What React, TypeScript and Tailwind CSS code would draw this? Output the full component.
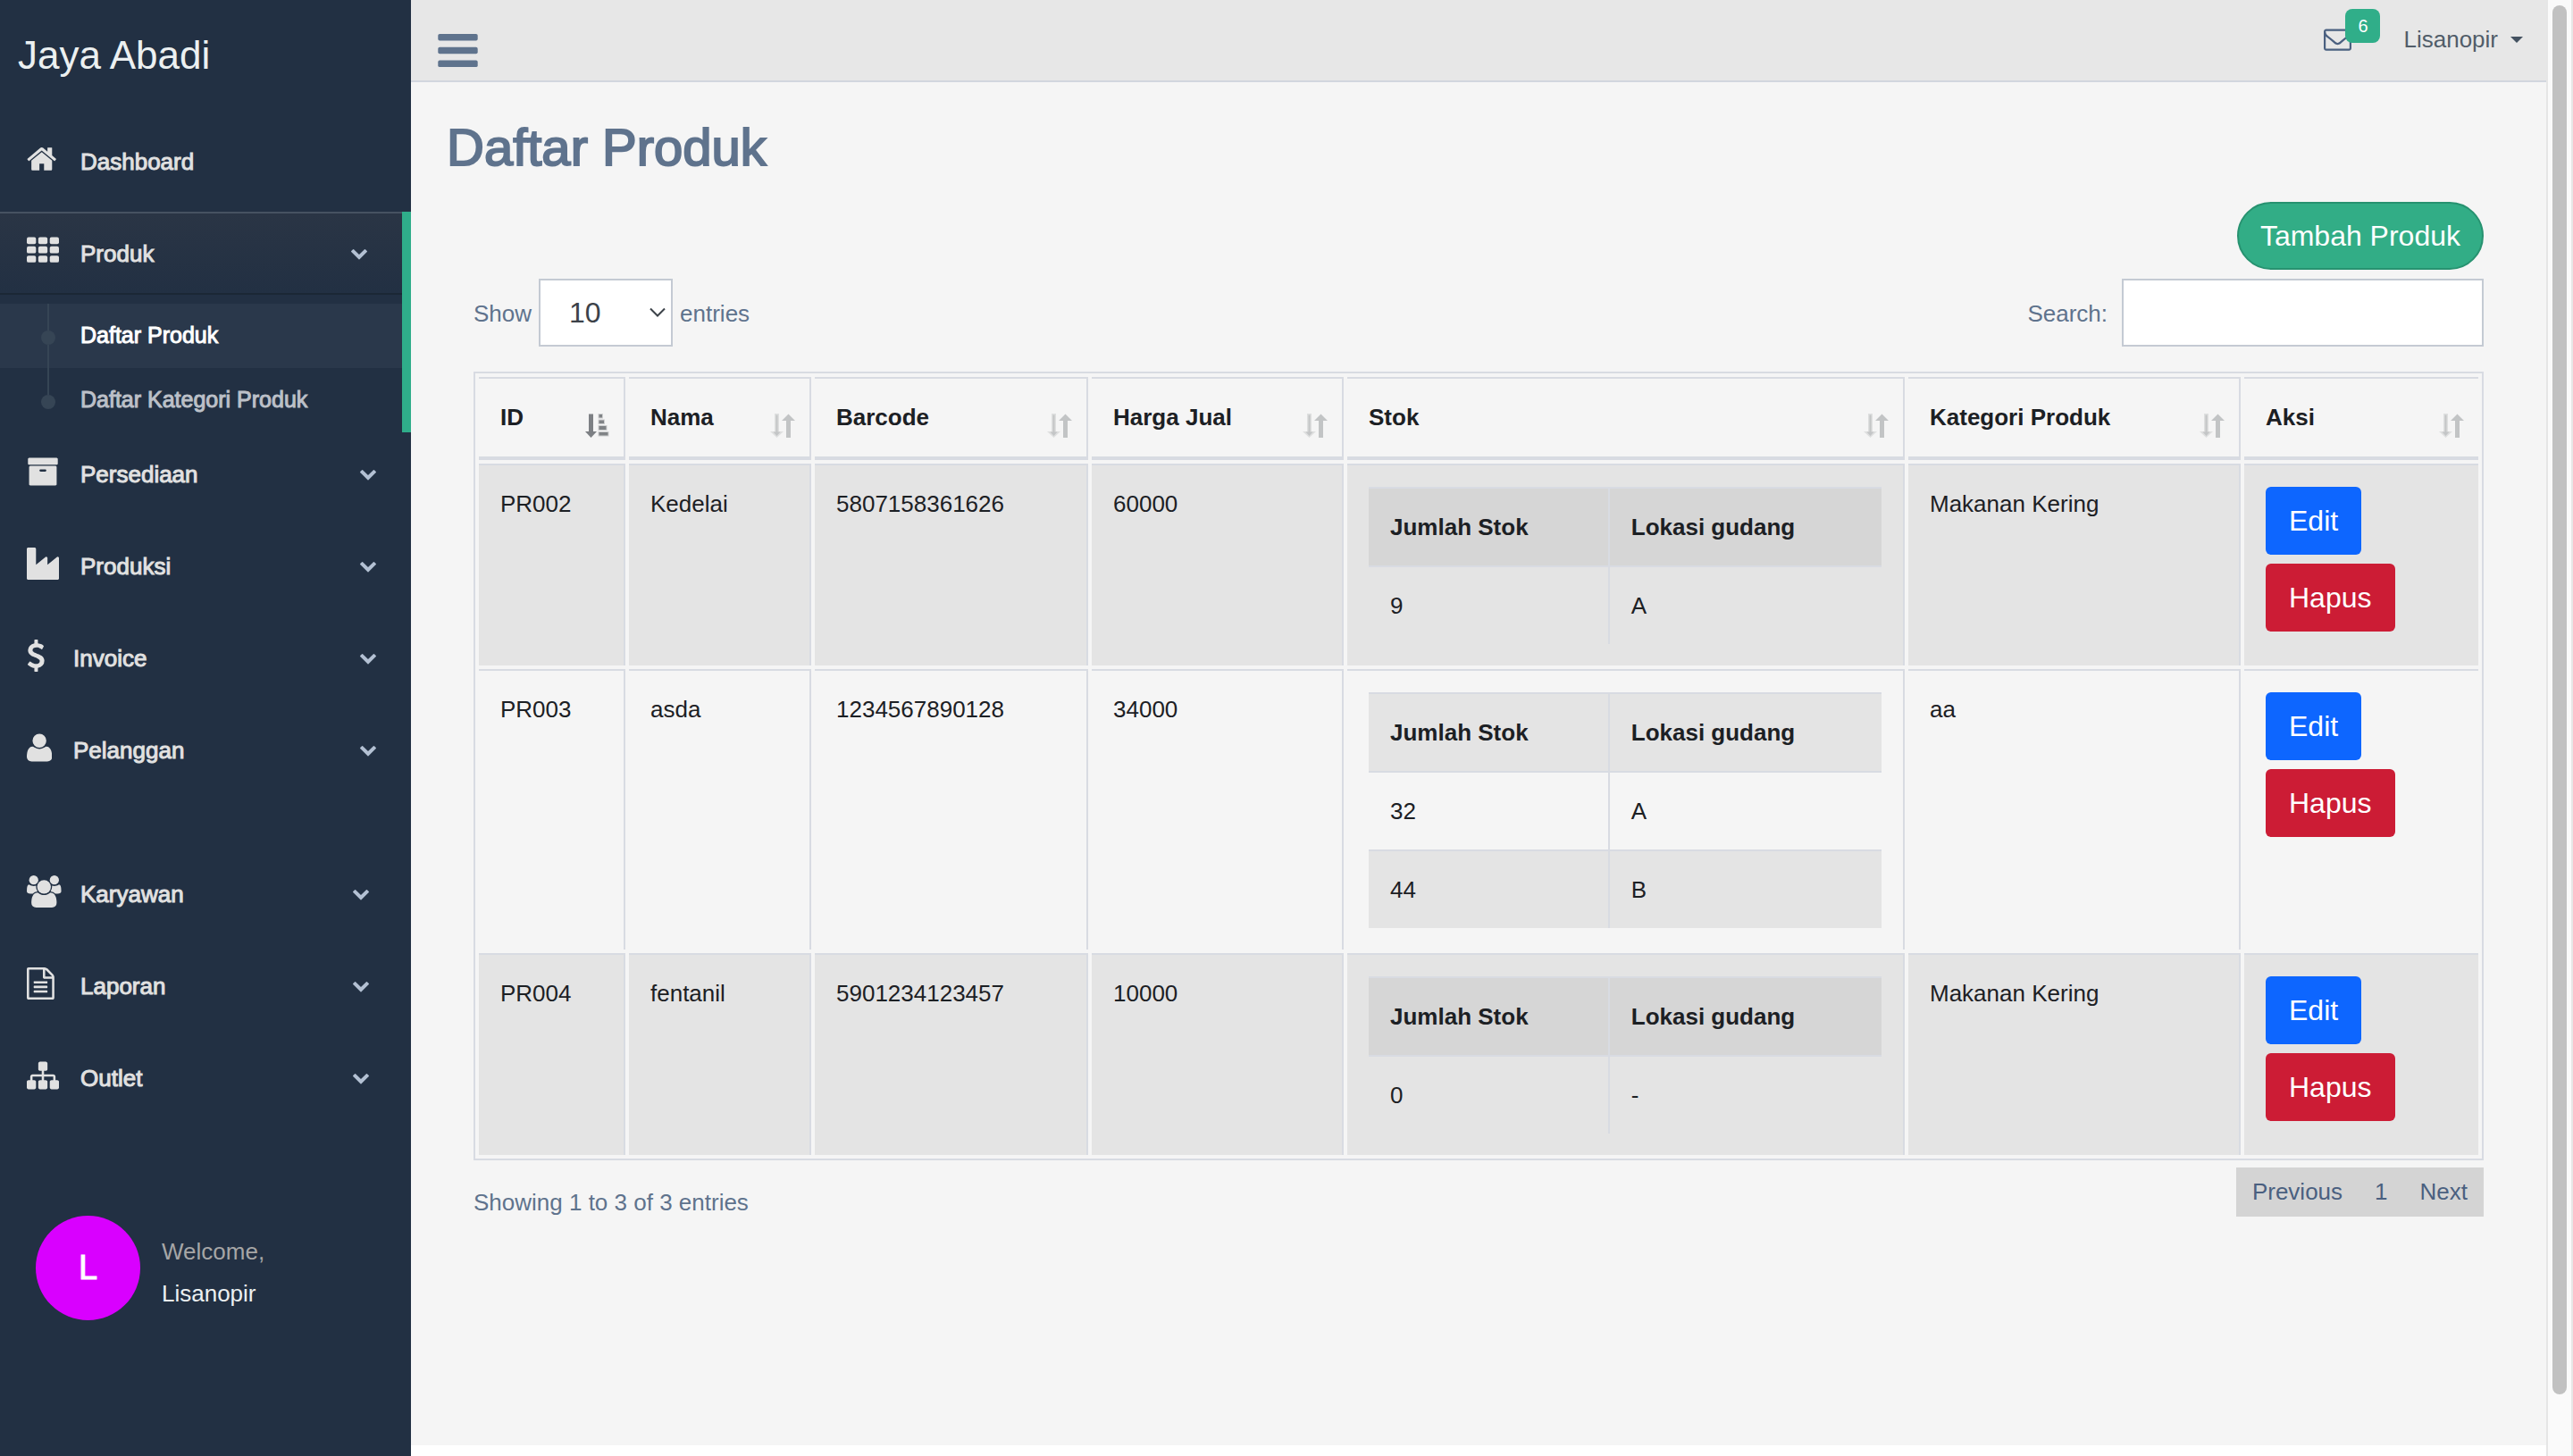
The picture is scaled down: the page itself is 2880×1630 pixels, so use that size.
import React, { useState } from "react";

type Product = {
  id: string;
  name: string;
  barcode: string;
  price: string;
  category: string;
  stock: { amount: string; warehouse: string }[];
};

const PRODUCTS: Product[] = [
  {
    id: "PR002",
    name: "Kedelai",
    barcode: "5807158361626",
    price: "60000",
    category: "Makanan Kering",
    stock: [{ amount: "9", warehouse: "A" }],
  },
  {
    id: "PR003",
    name: "asda",
    barcode: "1234567890128",
    price: "34000",
    category: "aa",
    stock: [
      { amount: "32", warehouse: "A" },
      { amount: "44", warehouse: "B" },
    ],
  },
  {
    id: "PR004",
    name: "fentanil",
    barcode: "5901234123457",
    price: "10000",
    category: "Makanan Kering",
    stock: [{ amount: "0", warehouse: "-" }],
  },
];

const COLUMNS = ["ID", "Nama", "Barcode", "Harga Jual", "Stok", "Kategori Produk", "Aksi"];

const MEDIUM = "[-webkit-text-stroke:1px_currentColor]";

function Glyph({ viewBox, children }: { viewBox: string; children: React.ReactNode }) {
  return (
    <svg viewBox={viewBox} className="h-9 w-auto shrink-0 fill-current" aria-hidden="true">
      {children}
    </svg>
  );
}

const HomeIcon = (
  <Glyph viewBox="64 0 1664 1792">
    <path d="M1472 992v480q0 26-19 45t-45 19h-384v-384h-256v384h-384q-26 0-45-19t-19-45v-480q0-1 .5-3t.5-3l575-474 575 474q1 2 1 6zm223-69l-62 74q-8 9-21 11h-3q-13 0-21-7l-692-577-692 577q-12 8-24 7-13-2-21-11l-62-74q-8-10-7-23.5t11-21.5l719-599q32-26 76-26t76 26l244 204v-195q0-14 9-23t23-9h192q14 0 23 9t9 23v408l219 182q10 8 11 21.5t-7 23.5z" />
  </Glyph>
);

const GridIcon = (
  <Glyph viewBox="0 0 1792 1792">
    {[128, 640, 1152].map((y) =>
      [0, 640, 1280].map((x) => (
        <rect key={`${x}-${y}`} x={x} y={y} width="512" height="384" rx="96" />
      ))
    )}
  </Glyph>
);

const ArchiveIcon = (
  <Glyph viewBox="0 0 1792 1792">
    <path d="M1088 832q0-26-19-45t-45-19h-256q-26 0-45 19t-19 45 19 45 45 19h256q26 0 45-19t19-45zm576-192v960q0 26-19 45t-45 19h-1408q-26 0-45-19t-19-45v-960q0-26 19-45t45-19h1408q26 0 45 19t19 45zm64-448v256q0 26-19 45t-45 19h-1536q-26 0-45-19t-19-45v-256q0-26 19-45t45-19h1536q26 0 45 19t19 45z" />
  </Glyph>
);

const IndustryIcon = (
  <Glyph viewBox="0 0 1792 1792">
    <path d="M448 0q26 0 45 19t19 45v891l536-429q17-14 40-14 26 0 45 19t19 45v379l536-429q17-14 40-14 26 0 45 19t19 45v1152q0 26-19 45t-45 19h-1664q-26 0-45-19t-19-45v-1664q0-26 19-45t45-19h384z" />
  </Glyph>
);

const DollarIcon = (
  <Glyph viewBox="384 0 1024 1792">
    <path d="M1362 1185q0 153-99.5 263.5t-258.5 136.5v175q0 14-9 23t-23 9h-135q-13 0-22.5-9.5t-9.5-22.5v-175q-66-9-127.5-31t-101.5-44.5-74-48-46.5-37.5-17.5-18q-17-21-2-41l103-135q7-10 23-12 15-2 24 9l2 2q113 99 243 125 37 8 74 8 81 0 142.5-43t61.5-122q0-28-15-53t-33.5-42-58.5-37.5-66-32-80-32.5q-39-16-61.5-25t-61.5-26.5-62.5-31-56.5-35.5-53.5-42.5-43.5-49-35.5-58-21-66.5-8.5-78q0-138 98-242t255-134v-180q0-13 9.5-22.5t22.5-9.5h135q14 0 23 9t9 23v176q57 6 110.5 23t87 33.5 63.5 37.5 39 29 15 14q17 18 5 38l-81 146q-8 15-23 16-14 3-27-7-3-3-14.5-12t-39-26.5-58.5-32-74.5-26-85.5-11.5q-95 0-155 43t-60 111q0 26 8.5 48t29.5 41.5 39.5 33 56 31 60.5 27 70 27.5q53 20 81 31.5t76 35 75.5 42.5 62 50 53 63.5 31.5 76.5 13 94z" />
  </Glyph>
);

const UserIcon = (
  <Glyph viewBox="192 0 1408 1792">
    <path d="M1600 1405q0 120-73 189.5t-194 69.5h-874q-121 0-194-69.5t-73-189.5q0-53 3.5-103.5t14-109 26.5-108.5 43-97.5 62-81 85.5-53.5 111.5-20q9 0 42 21.5t74.5 48 108 48 133.5 21.5 133.5-21.5 108-48 74.5-48 42-21.5q61 0 111.5 20t85.5 53.5 62 81 43 97.5 26.5 108.5 14 109 3.5 103.5zm-320-893q0 159-112.5 271.5t-271.5 112.5-271.5-112.5-112.5-271.5 112.5-271.5 271.5-112.5 271.5 112.5 112.5 271.5z" />
  </Glyph>
);

const UsersIcon = (
  <Glyph viewBox="64 0 1920 1792">
    <path d="M657 896q-162 5-265 128h-134q-82 0-138-40.5t-56-118.5q0-353 124-353 6 0 43.5 21t97.5 42.5 119 21.5q67 0 133-23-5 37-5 66 0 139 81 256z" />
    <path d="M1728 1533q0 120-73 189.5t-194 69.5h-874q-121 0-194-69.5t-73-189.5q0-53 3.5-103.5t14-109 26.5-108.5 43-97.5 62-81 85.5-53.5 111.5-20q10 0 43 21.5t73 48 107 48 135 21.5 135-21.5 107-48 73-48 43-21.5q61 0 111.5 20t85.5 53.5 62 81 43 97.5 26.5 108.5 14 109 3.5 103.5z" />
    <path d="M1984 865q0 78-56 118.5t-138 40.5h-134q-103-123-265-128 81-117 81-256 0-29-5-66 66 23 133 23 59 0 119-21.5t97.5-42.5 43.5-21q124 0 124 353z" />
    <circle cx="448" cy="256" r="256" />
    <circle cx="1600" cy="256" r="256" />
    <circle cx="1024" cy="640" r="384" />
  </Glyph>
);

const FileIcon = (
  <Glyph viewBox="128 0 1536 1792">
    <path d="M1596 380q28 28 48 76t20 88v1152q0 40-28 68t-68 28h-1344q-40 0-68-28t-28-68v-1600q0-40 28-68t68-28h896q40 0 88 20t76 48zm-444-244v376h376q-10-29-22-41l-313-313q-12-12-41-22zm384 1528v-1024h-416q-40 0-68-28t-28-68v-416h-768v1536h1280zm-1024-864q0-14 9-23t23-9h704q14 0 23 9t9 23v64q0 14-9 23t-23 9h-704q-14 0-23-9t-9-23v-64zm736 224q14 0 23 9t9 23v64q0 14-9 23t-23 9h-704q-14 0-23-9t-9-23v-64q0-14 9-23t23-9h704zm0 256q14 0 23 9t9 23v64q0 14-9 23t-23 9h-704q-14 0-23-9t-9-23v-64q0-14 9-23t23-9h704z" />
  </Glyph>
);

const SitemapIcon = (
  <Glyph viewBox="0 0 1792 1792">
    <path d="M1792 1248v320q0 40-28 68t-68 28h-320q-40 0-68-28t-28-68v-320q0-40 28-68t68-28h96v-192h-512v192h96q40 0 68 28t28 68v320q0 40-28 68t-68 28h-320q-40 0-68-28t-28-68v-320q0-40 28-68t68-28h96v-192h-512v192h96q40 0 68 28t28 68v320q0 40-28 68t-68 28h-320q-40 0-68-28t-28-68v-320q0-40 28-68t68-28h96v-192q0-52 38-90t90-38h512v-192h-96q-40 0-68-28t-28-68v-320q0-40 28-68t68-28h320q40 0 68 28t28 68v320q0 40-28 68t-68 28h-96v192h512q52 0 90 38t38 90v192h96q40 0 68 28t28 68z" />
  </Glyph>
);

function Chevron() {
  return (
    <svg viewBox="0 0 1792 1792" className="mb-1 ml-auto h-5 w-5 self-center fill-[#b3c0d3]" aria-hidden="true">
      <path d="M1683 808l-742 741q-19 19-45 19t-45-19l-742-741q-19-19-19-45.5t19-45.5l166-165q19-19 45-19t45 19l531 531 531-531q19-19 45-19t45 19l166 165q19 19 19 45.5t-19 45.5z" />
    </svg>
  );
}

type NavProps = {
  icon: React.ReactNode;
  label: string;
  tight?: boolean;
  chevron?: "near" | "far";
  active?: boolean;
};

function NavLink({ icon, label, tight, chevron, active }: NavProps) {
  return (
    <a
      href="#"
      className={`mb-[10px] flex items-start border-y-2 pb-[22px] pl-[30px] pt-6 text-[26px] leading-[43px] text-[#e1e1e1] ${
        chevron === "near" ? "pr-[46px]" : "pr-[38px]"
      } ${
        active
          ? "border-t-[#465261] border-b-[#1b2735] bg-linear-to-b from-[#2a3545] to-[#223043] [text-shadow:0_-2px_0_rgba(0,0,0,0.25)]"
          : "border-transparent"
      }`}
    >
      <span className={tight ? "w-[52px]" : "w-[60px]"}>{icon}</span>
      <span className={MEDIUM}>{label}</span>
      {chevron && <Chevron />}
    </a>
  );
}

function SubLink({ label, current, last }: { label: string; current?: boolean; last?: boolean }) {
  return (
    <a
      href="#"
      className={`flex h-[72px] text-[25px] leading-[70px] ${
        current ? "bg-[#2a384b] text-white" : "text-[#bcc0c8]"
      }`}
    >
      <span className="flex w-[90px] flex-col items-center pl-[18px]">
        <span className="h-[30px] w-[2px] bg-[#364555]" />
        <span className="h-4 w-4 rounded-full bg-[#364555]" />
        {!last && <span className="w-[2px] flex-1 bg-[#364555]" />}
      </span>
      <span className={MEDIUM}>{label}</span>
    </a>
  );
}

function Sidebar() {
  return (
    <aside className="w-[460px] shrink-0 bg-[#223043]">
      <a href="#" className="block px-5 pt-8 text-[44px] leading-[60px] text-[#ecf0f1]">
        Jaya Abadi
      </a>
      <nav className="mt-[42px]">
        <NavLink icon={HomeIcon} label="Dashboard" />
        <div className="border-r-[10px] border-[#2fad8a]">
          <NavLink icon={GridIcon} label="Produk" chevron="far" active />
          <SubLink label="Daftar Produk" current />
          <SubLink label="Daftar Kategori Produk" last />
        </div>
        <NavLink icon={ArchiveIcon} label="Persediaan" chevron="far" />
        <NavLink icon={IndustryIcon} label="Produksi" chevron="far" />
        <NavLink icon={DollarIcon} label="Invoice" chevron="far" tight />
        <NavLink icon={UserIcon} label="Pelanggan" chevron="far" tight />
      </nav>
      <nav className="mt-[68px]">
        <NavLink icon={UsersIcon} label="Karyawan" chevron="near" />
        <NavLink icon={FileIcon} label="Laporan" chevron="near" />
        <NavLink icon={SitemapIcon} label="Outlet" chevron="near" />
      </nav>
      <div className="mt-[108px] flex items-center gap-6 pl-10">
        <div className="flex h-[117px] w-[117px] items-center justify-center rounded-full bg-[#d900ff] text-[38px] text-white">
          <span className={MEDIUM}>L</span>
        </div>
        <div className="pt-[10px] text-[26px] leading-[47px]">
          <p className="text-[#a6a6a6]">Welcome,</p>
          <p className="text-[#ecf0f1]">Lisanopir</p>
        </div>
      </div>
    </aside>
  );
}

function TopBar() {
  return (
    <header className="flex h-[92px] items-start justify-between border-b-2 border-[#d2d6de] bg-[#e7e7e7] pl-[30px] pr-[26px]">
      <button type="button" aria-label="Toggle menu" className="mt-[38px]">
        <svg viewBox="128 256 1536 1280" className="h-[37px] w-[45px] fill-[#5f738d]" aria-hidden="true">
          <rect x="128" y="256" width="1536" height="256" rx="64" />
          <rect x="128" y="768" width="1536" height="256" rx="64" />
          <rect x="128" y="1280" width="1536" height="256" rx="64" />
        </svg>
      </button>
      <div className="flex items-start">
        <button type="button" aria-label="Messages" className="relative mr-[58px] mt-7 text-[#4a6080]">
          <svg viewBox="0 0 1792 1792" className="h-[31px] w-[31px] fill-current" aria-hidden="true">
            <path d="M1664 1504v-768q-32 36-69 66-268 206-426 338-51 43-83 67t-86.500 48.500-102.500 24.500h-2q-48 0-102.500-24.500t-86.500-48.500-83-67q-158-132-426-338-37-30-69-66v768q0 13 9.500 22.500t22.500 9.500h1472q13 0 22.500-9.500t9.500-22.500zm0-1051v-24.500l-.5-13-3-12.500-5.500-9-9-7.500-14-2.500h-1472q-13 0-22.500 9.500t-9.500 22.500q0 168 147 284 193 152 401 317 6 5 35 29.500t46 37.500 44.500 31.500 50.500 27.500 43 9h2q20 0 43-9t50.500-27.500 44.500-31.500 46-37.500 35-29.500q208-165 401-317 54-43 100.500-115.500t46.500-131.500zm128-37v1088q0 66-47 113t-113 47h-1472q-66 0-113-47t-47-113v-1088q0-66 47-113t113-47h1472q66 0 113 47t47 113z" />
          </svg>
          <span className="absolute -right-8 -top-[18px] flex h-[38px] w-[39px] items-center justify-center rounded-lg bg-[#30ae89] text-[20px] leading-none text-white">
            6
          </span>
        </button>
        <button type="button" className="mt-[25px] flex items-center gap-[14px] text-[26px] leading-[39px] text-[#515d69]">
          Lisanopir
          <svg viewBox="0 0 14 7" className="h-[7px] w-[14px] fill-[#445261]" aria-hidden="true">
            <path d="M0 0h14l-7 7z" />
          </svg>
        </button>
      </div>
    </header>
  );
}

function SortIcon({ sorted }: { sorted?: boolean }) {
  if (sorted) {
    return (
      <svg viewBox="0 0 28 28" className="-mb-1 mt-[15px] h-7 w-7 shrink-0" aria-hidden="true">
        <path d="M5 0.500h5v19.500h4l-6.500 7l-6.500-7h4z" fill="#7d8084" />
        <g fill="#808386" stroke="#cfd0d1" strokeWidth="1">
          <rect x="16" y="0.500" width="4.500" height="4.500" />
          <rect x="16" y="7" width="6.500" height="4.500" />
          <rect x="16" y="13.500" width="9" height="5" />
          <rect x="16" y="20.500" width="11" height="4.500" />
        </g>
      </svg>
    );
  }
  return (
    <svg viewBox="0 0 28 28" className="-mb-1 mt-[15px] h-7 w-7 shrink-0" aria-hidden="true">
      <path d="M5 0h5v20h5l-7.500 7l-7.500-7h5z" fill="#dedfdf" />
      <path d="M6.500 1.500h2v19h3l-4 4.500l-4-4.500h3z" fill="#c3c5c6" />
      <path d="M18 27v-19h-5l7.500-7.500l7.500 7.500h-5v19z" fill="#c2c4c5" />
    </svg>
  );
}

function StockTable({ stock, dark }: { stock: Product["stock"]; dark: boolean }) {
  const header = dark ? "bg-[#d6d6d6]" : "bg-[#e4e4e4]";
  return (
    <table className="w-full table-fixed border-separate border-spacing-0 text-left leading-[38px]">
      <colgroup>
        <col className="w-[47%]" />
        <col />
      </colgroup>
      <thead>
        <tr className={header}>
          <th className="border-r-2 border-y-2 border-[#d8dbe2] p-6 font-bold">Jumlah Stok</th>
          <th className="border-y-2 border-[#d8dbe2] p-6 font-bold">Lokasi gudang</th>
        </tr>
      </thead>
      <tbody>
        {stock.map((s, i) => {
          const line = i === 0 ? "border-t-0" : "border-t-2";
          const fill = i % 2 === 1 ? "bg-[#e4e4e4]" : "";
          return (
            <tr key={s.warehouse} className={fill}>
              <td className={`border-r-2 border-[#d8dbe2] px-6 py-6 ${line}`}>{s.amount}</td>
              <td className={`border-[#d8dbe2] px-6 py-6 ${line}`}>{s.warehouse}</td>
            </tr>
          );
        })}
      </tbody>
    </table>
  );
}

function ProductTable() {
  const cell = "border-t-2 border-r-2 border-[#d8dbe2] p-6 last:border-r-0";
  return (
    <table className="mt-7 w-full table-fixed border-separate border-spacing-1 border-2 border-[#d8dbe2] text-left text-[26px] leading-[39px] text-[#1c2024]">
      <colgroup>
        <col className="w-[164px]" />
        <col className="w-[204px]" />
        <col className="w-[306px]" />
        <col className="w-[282px]" />
        <col />
        <col className="w-[372px]" />
        <col className="w-[262px]" />
      </colgroup>
      <thead>
        <tr>
          {COLUMNS.map((c, i) => (
            <th
              key={c}
              className="border-b-4 border-r-2 border-t-2 border-[#d8dbe2] py-6 pl-6 pr-4 font-bold last:border-r-0"
            >
              <button type="button" className="flex h-[39px] w-full items-start justify-between text-left">
                {c}
                <SortIcon sorted={i === 0} />
              </button>
            </th>
          ))}
        </tr>
      </thead>
      <tbody className="align-top">
        {PRODUCTS.map((p, i) => (
          <tr key={p.id} className={i % 2 === 0 ? "[&>td]:bg-[#e4e4e4]" : ""}>
            <td className={cell}>{p.id}</td>
            <td className={cell}>{p.name}</td>
            <td className={cell}>{p.barcode}</td>
            <td className={cell}>{p.price}</td>
            <td className={cell}>
              <StockTable stock={p.stock} dark={i % 2 === 0} />
            </td>
            <td className={cell}>{p.category}</td>
            <td className={cell}>
              <div className="flex flex-col items-start gap-[10px] text-[32px] leading-[48px] text-white">
                <button type="button" className="rounded-md bg-[#0d66ff] px-[26px] py-[14px]">
                  Edit
                </button>
                <button type="button" className="rounded-md bg-[#cc1c35] px-[26px] py-[14px]">
                  Hapus
                </button>
              </div>
            </td>
          </tr>
        ))}
      </tbody>
    </table>
  );
}

export default function App() {
  const [query, setQuery] = useState("");
  return (
    <div className="flex min-h-screen font-['Liberation_Sans',Arial,sans-serif] text-[26px] text-[#5f738d]">
      <Sidebar />
      <div className="flex min-w-0 flex-1 flex-col bg-[#f5f5f5]">
        <TopBar />
        <main className="flex-1 px-[70px]">
          <h1 className="-ml-[30px] mt-[38px] text-[58px] leading-[70px] [-webkit-text-stroke:2px_currentColor]">
            Daftar Produk
          </h1>
          <div className="mt-[26px] flex justify-end">
            <button
              type="button"
              className="rounded-full border-2 border-[#279270] bg-[#32ad86] px-6 py-3 text-[32px] leading-[48px] text-white"
            >
              Tambah Produk
            </button>
          </div>
          <div className="mt-[10px] flex items-center justify-between">
            <label className="flex items-center gap-2">
              <span className="pt-[3px]">Show</span>
              <span className="grid items-center">
                <select
                  defaultValue="10"
                  className="col-start-1 row-start-1 h-[76px] w-[150px] appearance-none border-2 border-[#c4cad3] bg-white pl-8 text-[32px] text-[#3c4249]"
                >
                  <option>10</option>
                  <option>25</option>
                  <option>50</option>
                  <option>100</option>
                </select>
                <svg
                  viewBox="0 0 18 12"
                  className="pointer-events-none col-start-1 row-start-1 mr-2 h-3 w-[18px] justify-self-end"
                  fill="none"
                  stroke="#3c4249"
                  strokeWidth="2"
                  aria-hidden="true"
                >
                  <path d="M1 1.500l8 8l8-8" />
                </svg>
              </span>
              <span className="pt-[3px]">entries</span>
            </label>
            <label className="flex items-center gap-4">
              <span className="pt-[3px]">Search:</span>
              <input
                type="search"
                value={query}
                onChange={(e) => setQuery(e.target.value)}
                className="h-[76px] w-[405px] border-2 border-[#c4cad3] bg-white px-6 text-[32px]"
              />
            </label>
          </div>
          <ProductTable />
          <div className="mt-2 flex items-start justify-between">
            <p className="mt-5 leading-[39px]">Showing 1 to 3 of 3 entries</p>
            <div className="flex bg-[#d4d4d4] leading-[55px] text-[#4a6080]">
              <button type="button" className="px-[18px]">Previous</button>
              <button type="button" className="px-[18px]">1</button>
              <button type="button" className="px-[18px]">Next</button>
            </div>
          </div>
        </main>
        <div className="h-3 bg-white" />
      </div>
      <div className="flex w-[30px] shrink-0 flex-col items-center border-x-2 border-[#e6e6e6] bg-[#fafafa] pb-[69px] pt-[6px]">
        <div className="w-4 flex-1 rounded-full bg-[#c1c1c1]" />
      </div>
    </div>
  );
}
